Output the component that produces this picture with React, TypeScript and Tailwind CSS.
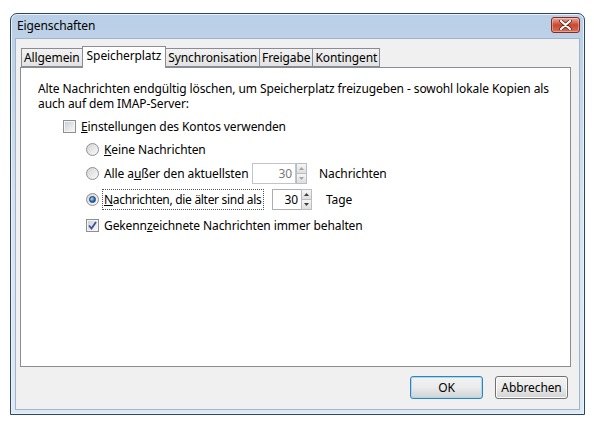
import React from 'react';

const FONT = "font-['Noto_Sans','Open_Sans',sans-serif]";

const Checkbox = ({ checked = false }: { checked?: boolean }) => (
  <span className="inline-flex h-[13px] w-[13px] shrink-0 items-center justify-center border border-[#8e8f8f] bg-[#f4f4f4]">
    <span className="flex h-[11px] w-[11px] items-center justify-center border border-[#f4f4f4] bg-gradient-to-br from-[#cdd1d6] to-[#f7f7f7]">
      {checked && (
        <svg width="9" height="9" viewBox="0 0 9 9">
          <path d="M1 4.5 L3.5 7.5 L8 1" fill="none" stroke="#3d5294" strokeWidth="1.8" />
        </svg>
      )}
    </span>
  </span>
);

const Radio = ({ checked = false }: { checked?: boolean }) => (
  <span className="inline-flex h-[13px] w-[13px] shrink-0 items-center justify-center rounded-full border border-[#8e8f8f] bg-gradient-to-br from-[#d3d3d3] to-[#fbfbfb]">
    {checked && (
      <span className="h-[7px] w-[7px] rounded-full border border-[#183a68] bg-[radial-gradient(circle_at_35%_35%,#b6dcfb_0%,#3c86d6_45%,#0d3567_100%)]" />
    )}
  </span>
);

const Spin = ({ value, disabled = false }: { value: string; disabled?: boolean }) => {
  const arrow = disabled ? '#a6a6a6' : '#3b3b3b';
  return (
    <div className="flex h-[21px] shrink-0 items-stretch">
      <div
        className={`flex items-center justify-end border pr-[3px] text-[12px] ${
          disabled
            ? 'w-[44px] border-[#c1c5ca] text-[#7a7a7a]'
            : 'w-[29px] border-[#abadb3] border-r-0 text-black'
        } bg-white`}
      >
        {value}
      </div>
      <div className="flex w-[11px] flex-col">
        <div className="flex flex-1 items-center justify-center border border-[#b9bdc3] bg-gradient-to-b from-[#f6f6f6] to-[#dedede]">
          <svg width="5" height="3" viewBox="0 0 5 3">
            <path d="M0 3 L2.5 0 L5 3 Z" fill={arrow} />
          </svg>
        </div>
        <div className="flex flex-1 items-center justify-center border border-t-0 border-[#b9bdc3] bg-gradient-to-b from-[#f6f6f6] to-[#dedede]">
          <svg width="5" height="3" viewBox="0 0 5 3">
            <path d="M0 0 L2.5 3 L5 0 Z" fill={arrow} />
          </svg>
        </div>
      </div>
    </div>
  );
};

const tabs = ['Allgemein', 'Speicherplatz', 'Synchronisation', 'Freigabe', 'Kontingent'];

export default function App() {
  return (
    <div className={`h-[428px] w-[594px] bg-white pl-[10px] pt-[13px] text-black tracking-[-0.1px] ${FONT}`}>
      <div className="flex h-[402px] w-[575px] flex-col rounded-t-[7px] border border-[#2c4660] bg-gradient-to-b from-[#b9cfe7] via-[#d7e4f2] to-[#dde9f5] shadow-[inset_0_0_0_1px_#e9f1f9]">
        {/* title bar */}
        <div className="flex h-[24px] items-start justify-between pl-[6px] pr-[4px]">
          <span className="mt-[4px] text-[12px] leading-[16px]">Eigenschaften</span>
          <div className="mt-[3px] flex h-[16px] w-[29px] items-center justify-center rounded-[3px] border border-[#7a3024] bg-gradient-to-b from-[#e9a99b] via-[#c9462c] to-[#d97058] shadow-[inset_0_0_0_1px_rgba(255,255,255,0.35)]">
            <svg width="13" height="10" viewBox="0 0 13 10">
              <path d="M2 1 L11 9 M11 1 L2 9" stroke="#5a1e14" strokeWidth="3.6" strokeLinecap="round" />
              <path d="M2 1 L11 9 M11 1 L2 9" stroke="#ffffff" strokeWidth="2.2" strokeLinecap="round" />
            </svg>
          </div>
        </div>

        {/* client area */}
        <div className="mx-[4px] mb-[4px] flex flex-1 flex-col border border-[#a3b4c7] bg-[#f0f0f0] px-[4px] pt-[7px]">
          <div className="flex items-end pl-[1px]">
            {tabs.map((t, i) =>
              i === 1 ? (
                <div
                  key={t}
                  className="relative z-10 -mb-px -mx-[1px] flex h-[22px] items-start border border-b-0 border-[#898c95] bg-white px-[4px] pt-[1px] text-[12px] leading-[16px]"
                >
                  {t}
                </div>
              ) : (
                <div
                  key={t}
                  className="flex h-[19px] items-center border border-[#898c95] bg-gradient-to-b from-[#f2f2f2] to-[#e3e3e3] px-[2px] text-[12px] leading-[16px] [&+&]:border-l-0"
                >
                  {t}
                </div>
              )
            )}
          </div>

          <div className="h-[300px] w-[551px] border border-[#898c95] bg-white pl-[17px] pt-[13px] text-[12px] leading-[15px]">
            <p className="whitespace-nowrap">
              Alte Nachrichten endgültig löschen, um Speicherplatz freizugeben - sowohl lokale Kopien als
              <br />
              auch auf dem IMAP-Server:
            </p>

            <div className="mt-[4px] flex flex-col whitespace-nowrap pl-[25px]">
              <div className="flex h-[22px] items-center gap-[5px]">
                <Checkbox />
                <span>
                  <span className="underline">E</span>instellungen des Kontos verwenden
                </span>
              </div>

              <div className="flex flex-col pl-[23px]">
                <div className="flex h-[24px] items-center gap-[5px]">
                  <Radio />
                  <span>
                    <span className="underline">K</span>eine Nachrichten
                  </span>
                </div>
                <div className="flex h-[24px] items-center">
                  <Radio />
                  <span className="ml-[5px] w-[148px] shrink-0">
                    Alle a<span className="underline">u</span>ßer den aktuellsten
                  </span>
                  <Spin value="30" disabled />
                  <span className="ml-[12px]">Nachrichten</span>
                </div>
                <div className="flex h-[28px] items-center">
                  <Radio checked />
                  <span className="ml-[3px] w-[170px] shrink-0">
                    <span className="inline-block border border-dotted border-[#555] px-[1px] py-[2px] tracking-[-0.3px]">
                      <span className="underline">N</span>achrichten, die älter sind als
                    </span>
                  </span>
                  <Spin value="30" />
                  <span className="ml-[14px]">Tage</span>
                </div>
                <div className="flex h-[24px] items-center gap-[5px]">
                  <Checkbox checked />
                  <span>
                    Gekenn<span className="underline">z</span>eichnete Nachrichten immer behalten
                  </span>
                </div>
              </div>
            </div>
          </div>

          <div className="flex flex-1 items-start justify-end gap-[12px] pr-[7px] pt-[9px]">
            <button className="h-[23px] w-[73px] rounded-[3px] border border-[#3c7fb1] bg-gradient-to-b from-[#f2f2f2] via-[#ebebeb] to-[#d2d2d2] text-[12px] shadow-[inset_0_0_0_1px_#9fdcf7]">
              OK
            </button>
            <button className="h-[23px] w-[73px] rounded-[3px] border border-[#707070] bg-gradient-to-b from-[#f2f2f2] via-[#ebebeb] to-[#d2d2d2] text-[12px] shadow-[inset_0_0_0_1px_#fcfcfc]">
              Abbrechen
            </button>
          </div>
        </div>
      </div>
    </div>
  );
}
